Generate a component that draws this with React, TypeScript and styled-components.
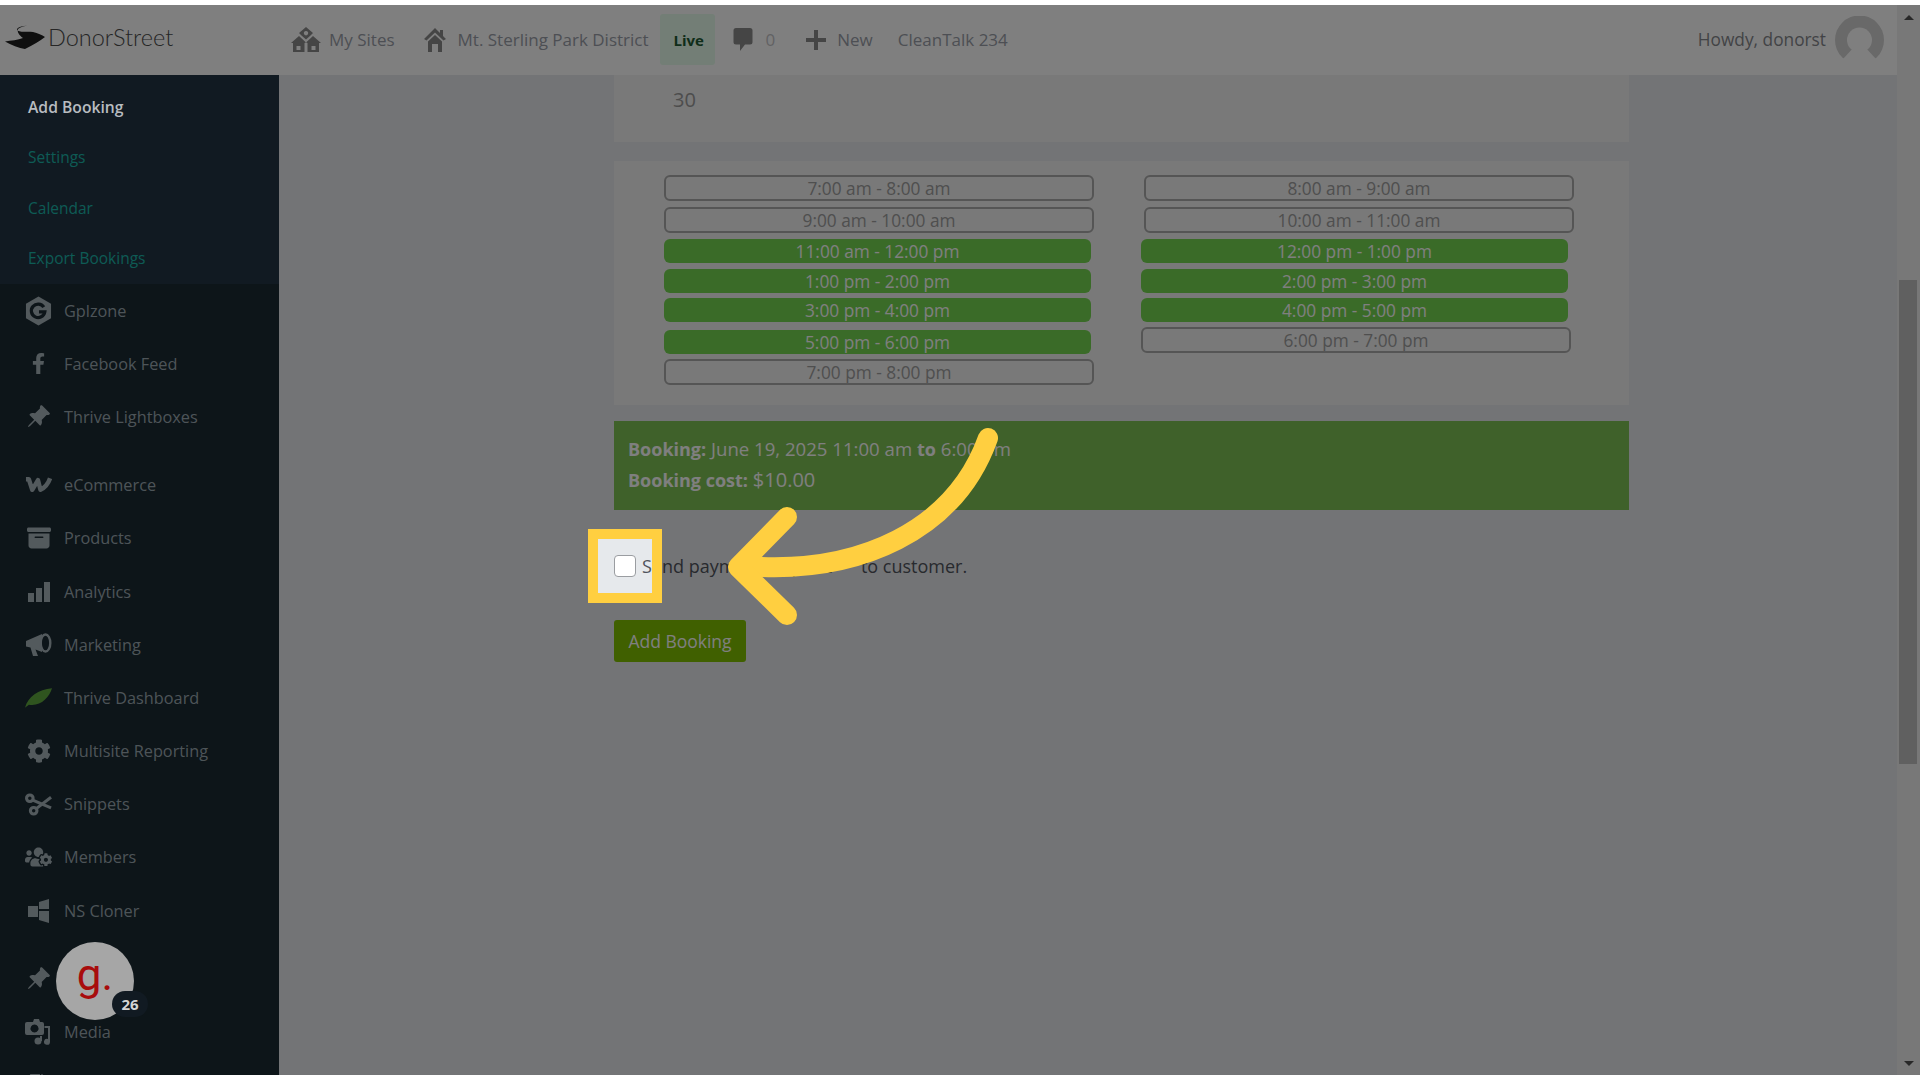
import styled, { createGlobalStyle } from 'styled-components';
import { ReactNode } from 'react';
import { FaFacebookF, FaCog, FaUsersCog, FaFile } from 'react-icons/fa';
import { FaBoxArchive } from 'react-icons/fa6';
import { BsPinAngleFill } from 'react-icons/bs';

const GlobalStyle = createGlobalStyle`
    html, body {
        margin: 0;
        padding: 0;
        background: #fff;
        overflow: hidden;
        font-family: "Open Sans", "Noto Sans", "Liberation Sans", sans-serif;
    }
`

const MultisiteIcon = () => (
    <svg width="30" height="26" viewBox="0 0 30 26" fill="currentColor">
        <path d="M15 0 L22 6 L19.5 8.5 L15 12.5 L10.5 8.5 L8 6 Z M15 4 a2.2 2.2 0 1 0 0.01 0 Z" fillRule="evenodd" />
        <path d="M8 9 L15 15.5 L13.5 16 L13.5 25 L2 25 L2 16 L0 16 Z M5.5 19 v4 h4 v-4 Z" fillRule="evenodd" />
        <path d="M22 9 L30 16 L28 16 L28 25 L16.5 25 L16.5 16 L15 15.5 Z M20.5 19 v4 h4 v-4 Z" fillRule="evenodd" />
    </svg>
)

const HomeIcon = () => (
    <svg width="22" height="24" viewBox="0 0 22 24" fill="currentColor">
        <path d="M11 0 L16 5 V2 H19 V8 L22 11 L19.5 12.5 L11 4.5 L2.5 12.5 L0 11 Z" />
        <path d="M11 7 L18 13.5 V24 H14 V16 H8 V24 H4 V13.5 Z" />
    </svg>
)

const CommentIcon = () => (
    <svg width="20" height="25" viewBox="0 0 20 25" fill="currentColor">
        <path d="M3 1 H17 a2.5 2.5 0 0 1 2.5 2.5 V15 a2.5 2.5 0 0 1 -2.5 2.5 H12 L7 24 V17.500 H3 a2.500 2.500 0 0 1 -2.500 -2.500 V3.500 A2.500 2.500 0 0 1 3 1 Z" />
    </svg>
)

const PlusIcon = () => (
    <svg width="20" height="20" viewBox="0 0 20 20" fill="currentColor">
        <path d="M8 0 H12 V8 H20 V12 H12 V20 H8 V12 H0 V8 H8 Z" />
    </svg>
)

const BrandMark = () => (
    <svg width="40" height="24" viewBox="0 0 40 24" fill="#1f1f1f">
        <path d="M23 0.500 C18 1 12 2 12 4.500 C13 8 22 6 28 7 C33 8 37 10 40 12 C35 16 28 20 20 24 C14 23 6 20 0 16.500 C6 15.500 13 15 18 13 C14 10 12 7 13 4 C15 2 19 1 23 0.500 Z" />
    </svg>
)

const AvatarIcon = () => (
    <svg width="49" height="48" viewBox="0 0 49 48">
        <circle cx="24.500" cy="24" r="24.500" fill="#d2d2d2" />
        <circle cx="24.500" cy="24" r="12.500" fill="#fff" />
        <path d="M19 31 L8 43 C12 47 16 49 24.500 49 C33 49 37 47 41 43 L30 31 Z" fill="#fff" />
    </svg>
)

const GplzoneIcon = () => (
    <svg width="28" height="30" viewBox="0 0 28 30">
        <polygon points="14,0 27,7.500 27,22.500 14,30 1,22.500 1,7.500" fill="currentColor" />
        <path d="M19.500 11 A7 7 0 1 0 20.500 16 H14.500" fill="none" stroke="#1a2a32" strokeWidth="3.400" />
    </svg>
)

const WooIcon = () => (
    <svg width="28" height="18" viewBox="0 0 28 18" fill="none" stroke="currentColor" strokeWidth="4.600" strokeLinejoin="round">
        <path d="M1 3 H4 L7.500 14 L13.500 4 L16 14 C20 12 24 8 26 2" />
    </svg>
)

const BarsIcon = () => (
    <svg width="24" height="20" viewBox="0 0 24 20" fill="currentColor">
        <rect x="1" y="11" width="6" height="9" />
        <rect x="9" y="6" width="6" height="14" />
        <rect x="17" y="0" width="6" height="20" />
    </svg>
)

const MegaphoneIcon = () => (
    <svg width="26" height="25" viewBox="0 0 26 25">
        <path d="M0 9 L16 2 V20 L9.500 17.500 L12 24 H7 L4.500 15.500 L0 14.500 Z" fill="currentColor" />
        <ellipse cx="19.500" cy="11" rx="4.800" ry="8.500" fill="none" stroke="currentColor" strokeWidth="2.400" />
    </svg>
)

const ScissorsIcon = () => (
    <svg width="28" height="23" viewBox="0 0 28 23" fill="none" stroke="currentColor" strokeWidth="3.200">
        <circle cx="5" cy="5" r="3.400" />
        <circle cx="9" cy="18" r="3.400" />
        <path d="M8 7 L27 15" />
        <path d="M12 15.500 L27 4" />
    </svg>
)

const LeafIcon = () => (
    <svg width="28" height="20" viewBox="0 0 28 20">
        <path d="M0 20 C3 9 14 1 28 0 C25 10 16 19 4 17 C3 18 1 19 0 20 Z" fill="#5fa83f" />
    </svg>
)

const ClonerIcon = () => (
    <svg width="22" height="24" viewBox="0 0 22 24" fill="currentColor">
        <rect x="0" y="7" width="10" height="11" />
        <path d="M11 3 L21 0 V10 H11 Z" />
        <path d="M11 12 H21 V24 L11 21 Z" />
    </svg>
)

const MediaIcon = () => (
    <svg width="27" height="26" viewBox="0 0 27 26" fill="currentColor">
        <path fillRule="evenodd" d="M5 3 H8 L9 0 H14 L15 3 H17 a2 2 0 0 1 2 2 V14 a2 2 0 0 1 -2 2 H2 a2 2 0 0 1 -2 -2 V5 a2 2 0 0 1 2 -2 Z M9.500 5.500 a4 4 0 1 0 0.010 0 Z" />
        <path d="M25 7 H19.500 V9 H23 V20 a3 3 0 1 0 2 3 Z" />
        <circle cx="13" cy="22" r="3.500" />
        <rect x="15" y="17" width="2" height="5" />
    </svg>
)

type MenuEntry = { label: string; icon: ReactNode; spaced?: boolean };

const menuEntries: MenuEntry[] = [
    { label: 'Gplzone', icon: <GplzoneIcon /> },
    { label: 'Facebook Feed', icon: <FaFacebookF size={21} /> },
    { label: 'Thrive Lightboxes', icon: <BsPinAngleFill size={25} /> },
    { label: 'eCommerce', icon: <WooIcon />, spaced: true },
    { label: 'Products', icon: <FaBoxArchive size={24} /> },
    { label: 'Analytics', icon: <BarsIcon /> },
    { label: 'Marketing', icon: <MegaphoneIcon /> },
    { label: 'Thrive Dashboard', icon: <LeafIcon /> },
    { label: 'Multisite Reporting', icon: <FaCog size={24} /> },
    { label: 'Snippets', icon: <ScissorsIcon /> },
    { label: 'Members', icon: <FaUsersCog size={28} /> },
    { label: 'NS Cloner', icon: <ClonerIcon /> },
    { label: '', icon: <BsPinAngleFill size={25} />, spaced: true },
    { label: 'Media', icon: <MediaIcon /> },
    { label: '', icon: <FaFile size={23} /> },
];

const leftSlots = [
    { label: '7:00 am - 8:00 am', gap: 0 },
    { label: '9:00 am - 10:00 am', gap: 6 },
    { label: '11:00 am - 12:00 pm', booked: true, gap: 6 },
    { label: '1:00 pm - 2:00 pm', booked: true, gap: 6 },
    { label: '3:00 pm - 4:00 pm', booked: true, gap: 5 },
    { label: '5:00 pm - 6:00 pm', booked: true, gap: 8 },
    { label: '7:00 pm - 8:00 pm', gap: 5 },
];

const rightSlots = [
    { label: '8:00 am - 9:00 am', gap: 0, indent: true },
    { label: '10:00 am - 11:00 am', gap: 6, indent: true },
    { label: '12:00 pm - 1:00 pm', booked: true, gap: 6 },
    { label: '2:00 pm - 3:00 pm', booked: true, gap: 6 },
    { label: '4:00 pm - 5:00 pm', booked: true, gap: 5 },
    { label: '6:00 pm - 7:00 pm', gap: 5 },
];

function App() {
    return (
        <>
            <GlobalStyle />
            <Screen>
                <Workspace>
                    <TopBar>
                        <Brand>
                            <BrandMark />
                            <BrandName>DonorStreet</BrandName>
                        </Brand>
                        <NavItem>
                            <MultisiteIcon />
                            My Sites
                        </NavItem>
                        <NavItem $gap={29} $iconGap={12}>
                            <HomeIcon />
                            Mt. Sterling Park District
                        </NavItem>
                        <LivePill>Live</LivePill>
                        <NavItem $gap={18}>
                            <CommentIcon />
                            <CommentCount>0</CommentCount>
                        </NavItem>
                        <NavItem $gap={31} $iconGap={11}>
                            <PlusIcon />
                            New
                        </NavItem>
                        <NavItem $gap={25}>CleanTalk 234</NavItem>
                        <Account>
                            Howdy, donorst
                            <AvatarIcon />
                        </Account>
                    </TopBar>
                    <Body>
                        <Sidebar>
                            <SubMenu>
                                <SubMenuItem $current>Add Booking</SubMenuItem>
                                <SubMenuItem>Settings</SubMenuItem>
                                <SubMenuItem>Calendar</SubMenuItem>
                                <SubMenuItem>Export Bookings</SubMenuItem>
                            </SubMenu>
                            {menuEntries.map((entry, i) => (
                                <MenuItem key={i} $spaced={entry.spaced}>
                                    <MenuIcon>{entry.icon}</MenuIcon>
                                    {entry.label}
                                </MenuItem>
                            ))}
                        </Sidebar>
                        <Content>
                            <DayCard>30</DayCard>
                            <SlotCard>
                                <SlotColumn>
                                    {leftSlots.map((slot) => (
                                        <Slot key={slot.label} $booked={slot.booked} $gap={slot.gap}>
                                            {slot.label}
                                        </Slot>
                                    ))}
                                </SlotColumn>
                                <SlotColumn>
                                    {rightSlots.map((slot) => (
                                        <Slot key={slot.label} $booked={slot.booked} $gap={slot.gap} $indent={slot.indent}>
                                            {slot.label}
                                        </Slot>
                                    ))}
                                </SlotColumn>
                            </SlotCard>
                            <Summary>
                                <div><b>Booking:</b> June 19, 2025 11:00 am <b>to</b> 6:00 pm</div>
                                <div><b>Booking cost:</b> <Price>$10.00</Price></div>
                            </Summary>
                            <SendRow>
                                <SendCheck type="checkbox" />
                                <span>Send payment <CoveredWord>request</CoveredWord> to customer.</span>
                            </SendRow>
                            <SubmitButton>Add Booking</SubmitButton>
                        </Content>
                    </Body>
                </Workspace>
                <Scrollbar>
                    <ScrollArrow $up />
                    <ScrollTrack>
                        <ScrollThumb />
                    </ScrollTrack>
                    <ScrollArrow />
                </Scrollbar>
                <Spotlight />
                <Arrow viewBox="0 0 1920 1080" fill="none" stroke="#ffcf40" strokeWidth="20" strokeLinecap="round" strokeLinejoin="round">
                    <path d="M988 438 C955 530 860 575 745 566" />
                    <path d="M787 517 L738 567 L787 615" />
                </Arrow>
                <ChatBubble>
                    <ChatLetter>g.</ChatLetter>
                    <ChatCount>26</ChatCount>
                </ChatBubble>
            </Screen>
        </>
    )
}

export default App;

const Screen = styled.div`
    position: relative;
    display: flex;
    height: 1070px;
    margin-top: 5px;
    overflow: hidden;
    background: #e6e9ec;
`

const Workspace = styled.div`
    display: flex;
    flex-direction: column;
    flex: 1;
    min-width: 0;
`

const TopBar = styled.div`
    display: flex;
    align-items: center;
    height: 70px;
    flex-shrink: 0;
    padding-bottom: 1px;
    box-sizing: border-box;
    background: #fff;
    font-size: 17px;
    color: #9a9ea8;
`

const Brand = styled.div`
    display: flex;
    align-items: center;
    gap: 3px;
    width: 286px;
    padding-left: 5px;
    margin-top: -6px;
`

const BrandName = styled.span`
    font-family: Lato, "Open Sans", sans-serif;
    font-weight: 300;
    font-size: 23.500px;
    color: #4c4c4c;
`

const NavItem = styled.div<{ $gap?: number; $iconGap?: number }>`
    display: flex;
    align-items: center;
    gap: ${(p) => p.$iconGap ?? 8}px;
    margin-left: ${(p) => p.$gap ?? 0}px;
    white-space: nowrap;

    svg {
        color: #8a8a8a;
    }
`

const LivePill = styled.div`
    display: flex;
    align-items: center;
    height: 51px;
    width: 55px;
    margin-left: 11px;
    padding-left: 14px;
    box-sizing: border-box;
    border-radius: 3px;
    background: #e6fdec;
    font-weight: 700;
    font-size: 15px;
    color: #1f5a34;
`

const CommentCount = styled.span`
    margin-left: 5px;
    color: #c4c4c8;
`

const Account = styled.div`
    display: flex;
    align-items: center;
    gap: 9px;
    margin-left: auto;
    padding-right: 13px;
    font-size: 17.300px;
    color: #85878c;
`

const Body = styled.div`
    display: flex;
    flex: 1;
    min-height: 0;
`

const Sidebar = styled.div`
    width: 279px;
    flex-shrink: 0;
    overflow: hidden;
    background: #1a2a32;
`

const SubMenu = styled.div`
    height: 209px;
    box-sizing: border-box;
    padding-top: 6.500px;
    background: #223444;
`

const SubMenuItem = styled.div<{ $current?: boolean }>`
    position: relative;
    z-index: ${(p) => (p.$current ? 3 : 'auto')};
    display: flex;
    align-items: center;
    height: 50.500px;
    padding-left: 28px;
    font-size: ${(p) => (p.$current ? 15.700 : 15.500)}px;
    font-weight: ${(p) => (p.$current ? 600 : 400)};
    color: ${(p) => (p.$current ? '#b8bcc0' : '#1cb6aa')};
`

const MenuItem = styled.div<{ $spaced?: boolean }>`
    display: flex;
    align-items: center;
    gap: 12px;
    height: 53.200px;
    margin-top: ${(p) => (p.$spaced ? 15 : 0)}px;
    padding-left: 25px;
    font-size: 16.300px;
    color: #9aa8b0;
`

const MenuIcon = styled.span`
    display: flex;
    align-items: center;
    justify-content: center;
    width: 27px;
    color: #a7b4bb;
`

const Content = styled.div`
    flex: 1;
    padding-left: 335px;
    padding-right: 268px;
    min-width: 0;
`

const DayCard = styled.div`
    height: 67px;
    padding: 14px 0 0 59px;
    box-sizing: border-box;
    background: #f2f2f2;
    font-size: 20px;
    line-height: 22px;
    color: #9a9a9a;
`

const SlotCard = styled.div`
    display: flex;
    align-items: flex-start;
    height: 244px;
    margin-top: 19px;
    padding: 14px 0 0 50px;
    box-sizing: border-box;
    background: #f2f2f2;
`

const SlotColumn = styled.div`
    display: flex;
    flex-direction: column;
    align-items: flex-start;
    width: 477px;
`

const Slot = styled.div<{ $booked?: boolean; $gap: number; $indent?: boolean }>`
    display: flex;
    align-items: center;
    justify-content: center;
    box-sizing: border-box;
    width: ${(p) => (p.$booked ? 427 : 430)}px;
    height: ${(p) => (p.$booked ? 24 : 26)}px;
    margin-top: ${(p) => p.$gap}px;
    margin-left: ${(p) => (p.$indent ? 3 : 0)}px;
    border: ${(p) => (p.$booked ? 'none' : '2px solid #aaa')};
    border-radius: 6px;
    background: ${(p) => (p.$booked ? '#74d650' : 'transparent')};
    font-size: 17.300px;
    color: ${(p) => (p.$booked ? '#fff' : '#9e9e9e')};
`

const Summary = styled.div`
    height: 89px;
    margin-top: 16px;
    padding: 13px 14px 0;
    box-sizing: border-box;
    background: #7ec254;
    font-size: 18.600px;
    line-height: 30.500px;
    color: #fff;

    b {
        font-weight: 700;
        font-size: 18px;
    }
`

const Price = styled.span`
    font-size: 20px;
`

const SendRow = styled.label`
    display: flex;
    align-items: center;
    gap: 6px;
    height: 22px;
    margin-top: 45px;
    font-size: 18px;
    color: #50545c;
`

const CoveredWord = styled.span`
    margin-right: 24px;
`

const SendCheck = styled.input`
    appearance: none;
    box-sizing: border-box;
    width: 22px;
    height: 22px;
    margin: 0;
    border: 1px solid #9a9da1;
    border-radius: 4px;
    background: #fff;
`

const SubmitButton = styled.button`
    display: block;
    width: 132px;
    height: 42px;
    margin-top: 43px;
    border: none;
    border-radius: 3px;
    background: #80c000;
    font-family: inherit;
    font-size: 17.500px;
    color: #fff;
`

const Scrollbar = styled.div`
    display: flex;
    flex-direction: column;
    width: 23px;
    flex-shrink: 0;
    background: #f1f1f1;
`

const ScrollArrow = styled.div<{ $up?: boolean }>`
    display: flex;
    align-items: center;
    justify-content: center;
    height: 24px;
    flex-shrink: 0;

    &::before {
        content: '';
        border-left: 5px solid transparent;
        border-right: 5px solid transparent;
        border-${(p) => (p.$up ? 'bottom' : 'top')}: 5px solid #505050;
    }
`

const ScrollTrack = styled.div`
    flex: 1;
    padding: 251px 3px 0 2px;
`

const ScrollThumb = styled.div`
    height: 484px;
    background: #c1c1c1;
`

const Spotlight = styled.div`
    position: absolute;
    z-index: 2;
    left: 588px;
    top: 524px;
    width: 74px;
    height: 74px;
    box-sizing: border-box;
    border: 10px solid #ffcf40;
    box-shadow: 0 0 0 3000px rgba(0, 0, 0, 0.5);
`

const Arrow = styled.svg`
    position: absolute;
    z-index: 2;
    left: 0;
    top: -5px;
    width: 1920px;
    height: 1080px;
    pointer-events: none;
`

const ChatBubble = styled.div`
    position: absolute;
    z-index: 3;
    left: 56px;
    top: 937px;
    display: flex;
    align-items: center;
    justify-content: center;
    width: 78px;
    height: 78px;
    border-radius: 50%;
    background: #a6a6a6;
`

const ChatLetter = styled.span`
    margin-top: -13px;
    font-family: Roboto, "Open Sans", sans-serif;
    font-size: 44px;
    line-height: 1;
    color: #a80c0c;
`

const ChatCount = styled.span`
    position: absolute;
    left: 56px;
    top: 49px;
    display: flex;
    align-items: center;
    justify-content: center;
    width: 36px;
    height: 26px;
    border-radius: 13px;
    background: #111a22;
    font-size: 15px;
    font-weight: 700;
    color: #d4d4d4;
`
